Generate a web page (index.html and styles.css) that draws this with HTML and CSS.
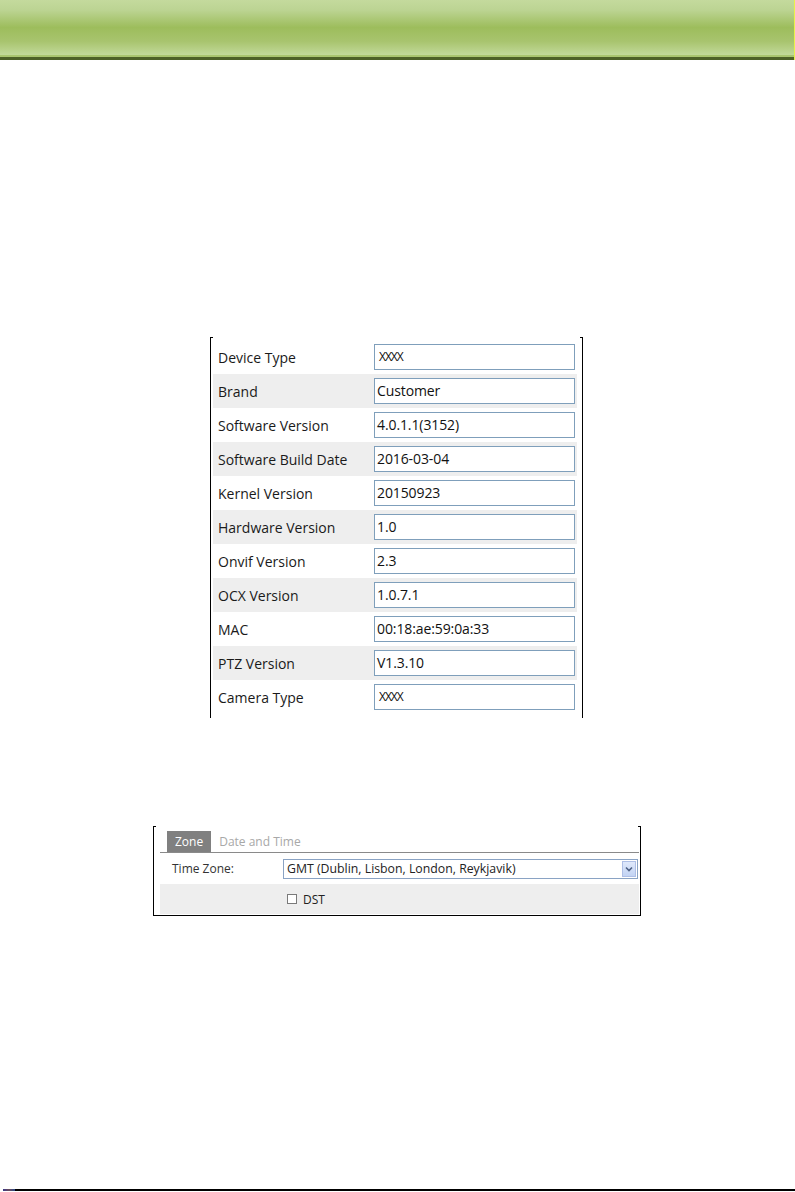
FILE: index.html
```html
<!DOCTYPE html>
<html>
<head>
<meta charset="utf-8">
<link rel="stylesheet" href="styles.css">
</head>
<body>
<div class="header"><div class="band"></div><div class="rim"></div></div>

<div class="info">
  <div class="row"><span class="lbl">Device Type</span><span class="val narrow">XXXX</span></div>
  <div class="row alt"><span class="lbl">Brand</span><span class="val">Customer</span></div>
  <div class="row"><span class="lbl">Software Version</span><span class="val">4.0.1.1(3152)</span></div>
  <div class="row alt"><span class="lbl">Software Build Date</span><span class="val">2016-03-04</span></div>
  <div class="row"><span class="lbl">Kernel Version</span><span class="val">20150923</span></div>
  <div class="row alt"><span class="lbl">Hardware Version</span><span class="val">1.0</span></div>
  <div class="row"><span class="lbl">Onvif Version</span><span class="val">2.3</span></div>
  <div class="row alt"><span class="lbl">OCX Version</span><span class="val">1.0.7.1</span></div>
  <div class="row"><span class="lbl">MAC</span><span class="val">00:18:ae:59:0a:33</span></div>
  <div class="row alt"><span class="lbl">PTZ Version</span><span class="val">V1.3.10</span></div>
  <div class="row"><span class="lbl">Camera Type</span><span class="val narrow">XXXX</span></div>
</div>

<div class="zone">
  <div class="tabs">
    <span class="tab active">Zone</span>
    <span class="tab">Date and Time</span>
  </div>
  <div class="zrow">
    <span class="zlbl">Time Zone:</span>
    <div class="select">
      <span class="sel-text">GMT (Dublin, Lisbon, London, Reykjavik)</span>
      <span class="sel-btn"><svg width="8" height="6" viewBox="0 0 8 6"><path d="M1 1.5 L4 4.5 L7 1.5" fill="none" stroke="#4d6185" stroke-width="1.6"/></svg></span>
    </div>
  </div>
  <div class="zrow alt">
    <span class="zlbl"></span>
    <span class="check"></span><span class="dst">DST</span>
  </div>
</div>

<div class="footer"><span class="mark"></span></div>
</body>
</html>
```

FILE: styles.css
```css
html, body {
  margin: 0;
  padding: 0;
  background: #ffffff;
}
body {
  width: 795px;
  height: 1192px;
  position: relative;
  font-family: "Open Sans", "Noto Sans", sans-serif;
  overflow: hidden;
}
.header {
  width: 794px;
  height: 60px;
  border-right: 1px solid #e8f24a;
  display: flex;
  flex-direction: column;
}
.band {
  height: 55px;
  background: linear-gradient(to bottom, #c4da9d 0%, #bcd493 18%, #9dbd5c 50%, #a8c46e 75%, #c2d99a 100%);
}
.rim {
  height: 2px;
  background: #a9c56f;
  border-bottom: 3px solid #4d6127;
}

.info {
  width: 364px;
  margin: 277px 0 0 210px;
  border-left: 1px solid #000;
  border-right: 1px solid #000;
  padding: 3px 5px 4px 2px;
  position: relative;
}
.info::before, .zone::before {
  content: "";
  position: absolute;
  left: -1px;
  top: 0;
  width: 3px;
  border-top: 1px solid #000;
}
.info::after, .zone::after {
  content: "";
  position: absolute;
  right: -1px;
  top: 0;
  width: 3px;
  border-top: 1px solid #000;
}
.row {
  height: 34px;
  display: flex;
  align-items: center;
  padding-left: 5px;
}
.row.alt {
  background: #eeeeee;
}
.lbl {
  width: 156px;
  font-size: 14px;
  color: #1a1a1a;
  letter-spacing: 0;
}
.val {
  box-sizing: border-box;
  width: 201px;
  height: 26px;
  border: 1px solid #7f9fbb;
  background: #fff;
  padding: 0 0 0 2px;
  font-size: 14px;
  line-height: 24px;
  color: #111;
  letter-spacing: -0.1px;
}
.val.narrow {
  font-size: 12px;
  letter-spacing: -1px;
  padding-left: 4px;
}

.zone {
  width: 479px;
  margin: 108px 0 0 153px;
  border-left: 1px solid #000;
  border-right: 1px solid #000;
  border-bottom: 1px solid #000;
  padding: 5px 1px 1px 6px;
  position: relative;
  font-size: 12px;
}
.tabs {
  display: flex;
  align-items: flex-end;
  height: 21px;
  border-bottom: 1px solid #8a8a8a;
  padding-left: 7px;
}
.tab {
  height: 21px;
  line-height: 21px;
  padding: 0 8px;
  color: #a8a8a8;
}
.tab.active {
  background: #808080;
  color: #fff;
  padding: 0 8px;
}
.zrow {
  height: 30px;
  display: flex;
  align-items: center;
}
.zrow:nth-child(2) {
  height: 31px;
}
.zrow.alt {
  background: #eeeeee;
}
.zlbl {
  width: 111px;
  padding-left: 12px;
  color: #333;
}
.select {
  box-sizing: border-box;
  width: 355px;
  height: 20px;
  border: 1px solid #8aa3c4;
  display: flex;
  align-items: center;
  justify-content: space-between;
  padding-left: 3px;
  background: #fff;
}
.sel-text {
  color: #222;
  font-size: 12.3px;
}
.sel-btn {
  width: 14px;
  height: 16px;
  margin-right: 1px;
  background: linear-gradient(#dfe8fb, #c2d3f4);
  border: 1px solid #aebfe6;
  box-sizing: border-box;
  display: flex;
  align-items: center;
  justify-content: center;
}
.check {
  box-sizing: border-box;
  width: 10px;
  height: 10px;
  border: 1px solid #7a7a7a;
  background: #fff;
  margin-left: 4px;
}
.dst {
  margin-left: 6px;
  color: #222;
}

.footer {
  position: absolute;
  left: 3px;
  right: 0;
  top: 1189px;
  height: 2px;
  background: #000;
}
.mark {
  display: block;
  width: 12px;
  height: 2px;
  background: linear-gradient(to right, #3a3a8a, #6a4a5a, #2a4a8a);
}
```
